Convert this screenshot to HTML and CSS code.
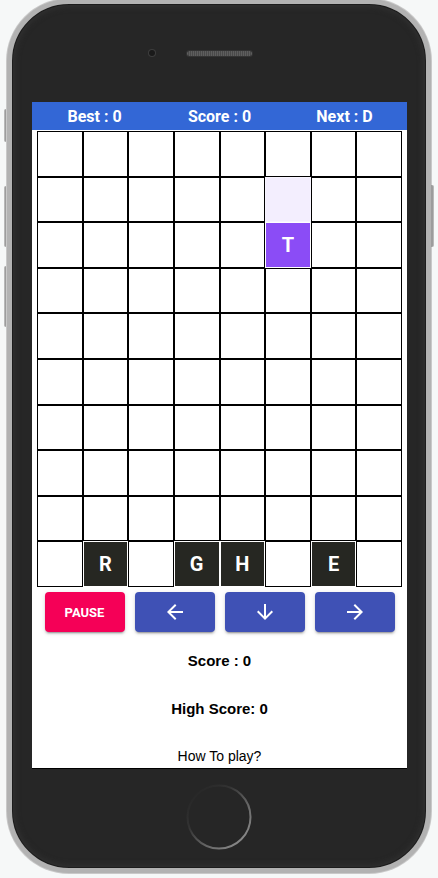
FILE: index.html
```html
<!DOCTYPE html>
<html>
<head>
<meta charset="utf-8">
<link rel="stylesheet" href="styles.css">
</head>
<body>
<div class="device">
  <div class="side side-left">
    <div class="key key-l key-mute"></div>
    <div class="key key-l key-vol1"></div>
    <div class="key key-l key-vol2"></div>
  </div>
  <div class="phone">
    <div class="bezel-top">
      <div class="cam-wrap"><div class="camera"></div></div>
      <div class="speaker"></div>
      <div></div>
    </div>
    <div class="screen">
      <div class="topbar">
        <div>Best : 0</div>
        <div>Score : 0</div>
        <div>Next : D</div>
      </div>
      <div class="board">
        <div class="cell"></div><div class="cell"></div><div class="cell"></div><div class="cell"></div><div class="cell"></div><div class="cell"></div><div class="cell"></div><div class="cell"></div>
        <div class="cell"></div><div class="cell"></div><div class="cell"></div><div class="cell"></div><div class="cell"></div><div class="cell ghost"></div><div class="cell"></div><div class="cell"></div>
        <div class="cell"></div><div class="cell"></div><div class="cell"></div><div class="cell"></div><div class="cell"></div><div class="cell active">T</div><div class="cell"></div><div class="cell"></div>
        <div class="cell"></div><div class="cell"></div><div class="cell"></div><div class="cell"></div><div class="cell"></div><div class="cell"></div><div class="cell"></div><div class="cell"></div>
        <div class="cell"></div><div class="cell"></div><div class="cell"></div><div class="cell"></div><div class="cell"></div><div class="cell"></div><div class="cell"></div><div class="cell"></div>
        <div class="cell"></div><div class="cell"></div><div class="cell"></div><div class="cell"></div><div class="cell"></div><div class="cell"></div><div class="cell"></div><div class="cell"></div>
        <div class="cell"></div><div class="cell"></div><div class="cell"></div><div class="cell"></div><div class="cell"></div><div class="cell"></div><div class="cell"></div><div class="cell"></div>
        <div class="cell"></div><div class="cell"></div><div class="cell"></div><div class="cell"></div><div class="cell"></div><div class="cell"></div><div class="cell"></div><div class="cell"></div>
        <div class="cell"></div><div class="cell"></div><div class="cell"></div><div class="cell"></div><div class="cell"></div><div class="cell"></div><div class="cell"></div><div class="cell"></div>
        <div class="cell"></div><div class="cell fixed">R</div><div class="cell"></div><div class="cell fixed">G</div><div class="cell fixed">H</div><div class="cell"></div><div class="cell fixed">E</div><div class="cell"></div>
      </div>
      <div class="controls">
        <button class="btn btn-pause">PAUSE</button>
        <button class="btn btn-move" aria-label="left">
          <svg width="24" height="24" viewBox="0 0 24 24"><path fill="#fff" d="M20 11H7.830l5.59-5.590L12 4l-8 8 8 8 1.410-1.410L7.830 13H20v-2z"/></svg>
        </button>
        <button class="btn btn-move" aria-label="down">
          <svg width="24" height="24" viewBox="0 0 24 24"><path fill="#fff" d="M20 12l-1.41-1.41L13 16.17V4h-2v12.17l-5.58-5.59L4 12l8 8 8-8z"/></svg>
        </button>
        <button class="btn btn-move" aria-label="right">
          <svg width="24" height="24" viewBox="0 0 24 24"><path fill="#fff" d="M12 4l-1.41 1.41L16.17 11H4v2h12.17l-5.58 5.59L12 20l8-8z"/></svg>
        </button>
      </div>
      <p class="stat stat-score">Score : 0</p>
      <p class="stat stat-high">High Score: 0</p>
      <p class="howto">How To play?</p>
    </div>
    <div class="bezel-bottom">
      <svg class="home" width="66" height="66" viewBox="0 0 66 66">
        <defs>
          <linearGradient id="ring" x1="0.1" y1="0.1" x2="0.9" y2="0.9">
            <stop offset="0" stop-color="#262626"/>
            <stop offset="0.3" stop-color="#333"/>
            <stop offset="0.6" stop-color="#5e5e5e"/>
            <stop offset="1" stop-color="#8c8c8c"/>
          </linearGradient>
        </defs>
        <circle cx="33" cy="33" r="31.5" fill="none" stroke="url(#ring)" stroke-width="2"/>
      </svg>
    </div>
  </div>
  <div class="side side-right">
    <div class="key key-r key-sleep"></div>
  </div>
</div>
</body>
</html>
```
FILE: styles.css
```css
html, body {
  margin: 0;
  padding: 0;
}
body {
  background: #f6f8f8;
  width: 438px;
  height: 878px;
  overflow: hidden;
}
.device {
  display: flex;
  margin-top: -1px;
}
.side {
  display: flex;
  flex-direction: column;
  width: 3px;
}
.side-left {
  margin-left: 4px;
  padding-top: 110px;
}
.side-right {
  padding-top: 186px;
}
.key {
  width: 3px;
  background: #9c9c9c;
}
.key-l {
  border-radius: 2px 0 0 2px;
  border-left: 1px solid #b8b8b8;
  box-sizing: border-box;
}
.key-r {
  border-radius: 0 2px 2px 0;
  border-right: 1px solid #b8b8b8;
  box-sizing: border-box;
}
.key-mute { height: 33px; }
.key-vol1 { height: 61px; margin-top: 44px; }
.key-vol2 { height: 61px; margin-top: 19px; }
.key-sleep { height: 62px; }

.phone {
  box-sizing: border-box;
  width: 424px;
  height: 874px;
  border: 5px solid #b2b2b2;
  border-radius: 62px;
  background: #262626;
  box-shadow: inset 0 0 0 1px #1c1c1c, inset 0 0 6px 2px #333, 0 0 0 1px #c9c9c9;
  padding: 0 20px;
  display: flex;
  flex-direction: column;
}
.bezel-top {
  height: 98px;
  display: grid;
  grid-template-columns: 1fr auto 1fr;
  align-items: start;
  padding-top: 46px;
  box-sizing: border-box;
  margin: 0 -20px;
}
.cam-wrap {
  display: flex;
  justify-content: flex-end;
  padding-right: 32px;
}
.camera {
  width: 6px;
  height: 6px;
  border-radius: 50%;
  background: #1a1a1a;
  box-shadow: 0 0 0 1px #3d3d3d;
}
.speaker {
  width: 65px;
  height: 5px;
  border-radius: 3px;
  margin-top: 1px;
  background: repeating-linear-gradient(90deg, #5e5e5e 0 1px, #4a4a4a 1px 2px);
  box-shadow: 0 0 0 1px #333;
}

.screen {
  box-sizing: border-box;
  width: 375px;
  height: 667px;
  background: #fff;
  overflow: hidden;
  border-bottom: 1px solid #000;
  font-family: "Liberation Sans", Arial, sans-serif;
  color: #000;
}
.topbar {
  height: 28px;
  background: #3367d6;
  display: grid;
  grid-template-columns: 1fr 1fr 1fr;
  align-items: center;
  text-align: center;
  color: #fff;
  font-family: Roboto, "Liberation Sans", sans-serif;
  font-weight: 700;
  font-size: 16px;
}
.board {
  margin: 1px 5px 0;
  width: 365px;
  height: 456px;
  display: grid;
  grid-template-columns: repeat(8, 1fr);
  grid-template-rows: repeat(10, 1fr);
}
.cell {
  box-sizing: border-box;
  border: 1px solid #000;
  display: flex;
  align-items: center;
  justify-content: center;
  font-family: Roboto, "Liberation Sans", sans-serif;
  font-weight: 700;
  font-size: 20px;
  color: #fff;
}
.cell.ghost {
  background: #f3eefe;
  border-color: #f8f5ff;
}
.cell.active {
  background: #8b4cf6;
  border-color: #fff;
}
.cell.fixed {
  background: #262722;
  border-color: #fff;
}
.controls {
  display: flex;
  justify-content: center;
  gap: 10px;
  margin-top: 5px;
}
.btn {
  width: 80px;
  height: 40px;
  border: 0;
  border-radius: 4px;
  padding: 0;
  display: flex;
  align-items: center;
  justify-content: center;
  color: #fff;
  font-family: Roboto, "Liberation Sans", sans-serif;
  font-weight: 700;
  font-size: 13px;
  box-shadow: 0 3px 1px -2px rgba(0,0,0,0.2), 0 2px 2px 0 rgba(0,0,0,0.14), 0 1px 5px 0 rgba(0,0,0,0.12);
}
.btn-pause {
  background: #f50057;
}
.btn-move {
  background: #3f51b5;
}
.stat {
  margin: 0;
  text-align: center;
  font-weight: 700;
  font-size: 15px;
  line-height: 18px;
}
.stat-score {
  margin-top: 20px;
}
.stat-high {
  margin-top: 30px;
}
.howto {
  margin: 29px 0 0;
  text-align: center;
  font-size: 14px;
  line-height: 18px;
}
.bezel-bottom {
  flex: 1;
  display: flex;
  justify-content: center;
  align-items: flex-start;
  padding-top: 15px;
}
```
